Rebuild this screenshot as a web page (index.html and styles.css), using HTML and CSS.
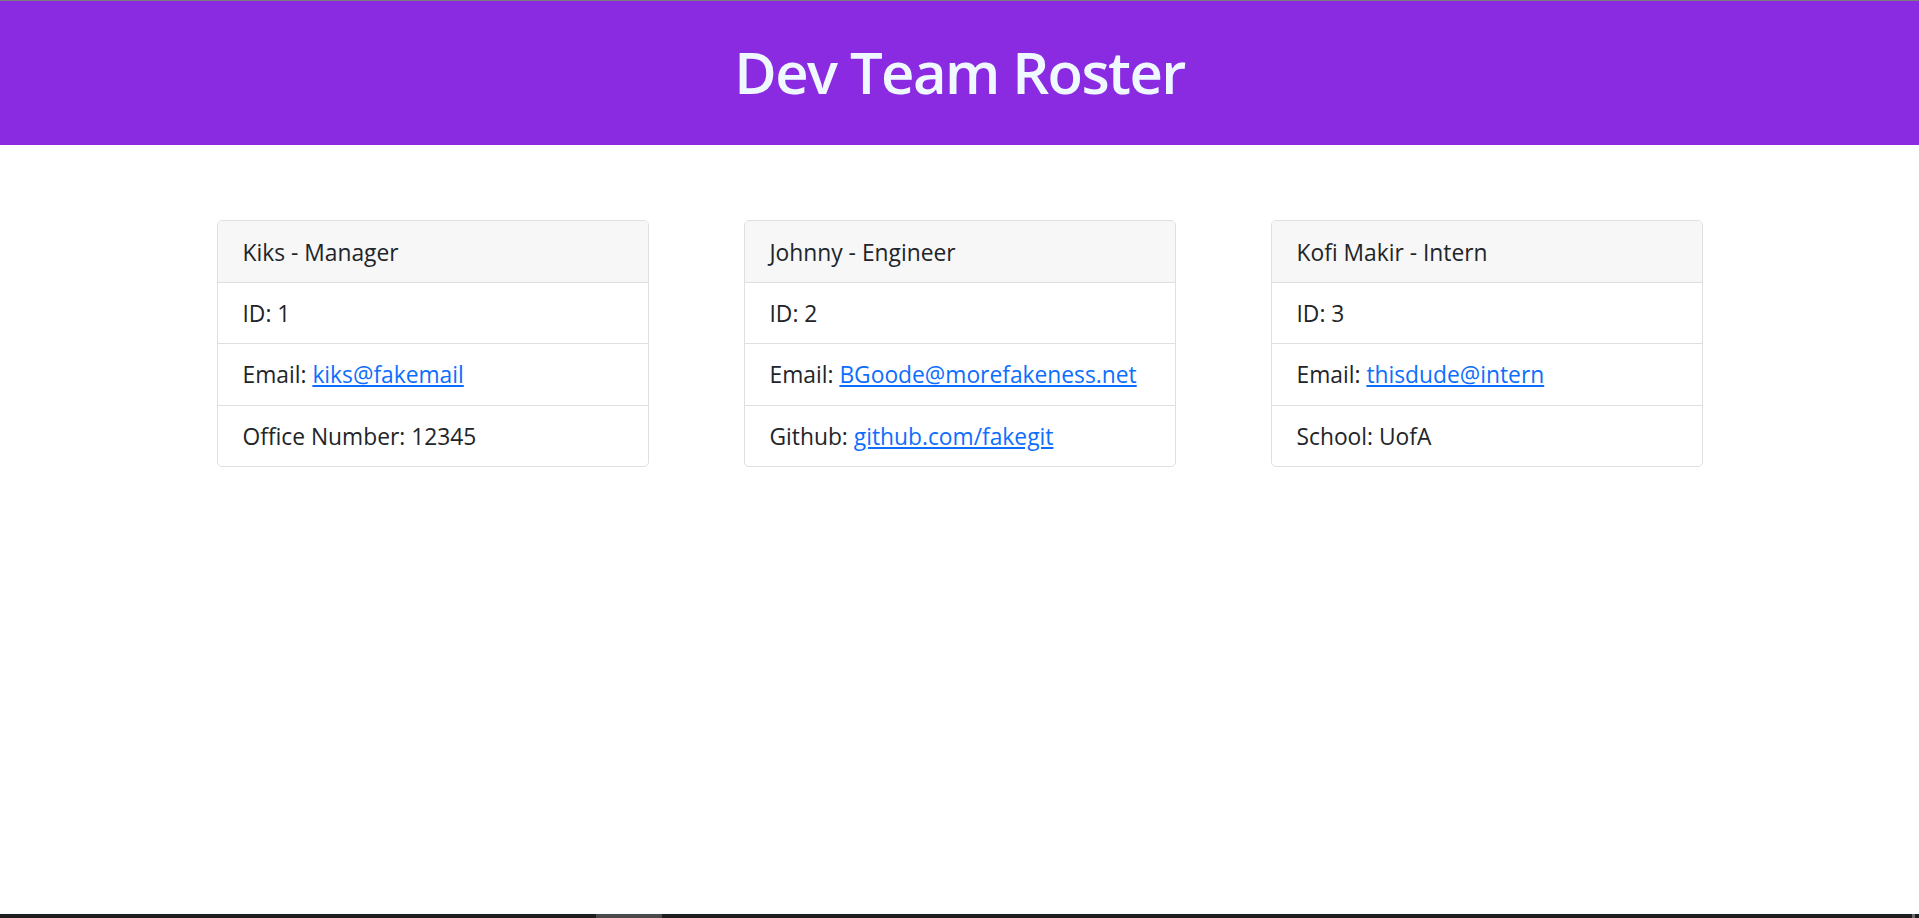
FILE: index.html
```html
<!DOCTYPE html>
<html lang="en">
<head>
<meta charset="utf-8">
<title>Dev Team Roster</title>
<link rel="stylesheet" href="styles.css">
</head>
<body>
<header class="banner">
  <h1 class="banner-title">Dev Team Roster</h1>
</header>
<main class="roster">
  <section class="card">
    <div class="card-header">Kiks - Manager</div>
    <ul class="card-list">
      <li class="card-item">ID: 1</li>
      <li class="card-item">Email: <a href="#" class="card-link">kiks@fakemail</a></li>
      <li class="card-item">Office Number: 12345</li>
    </ul>
  </section>
  <section class="card">
    <div class="card-header">Johnny - Engineer</div>
    <ul class="card-list">
      <li class="card-item">ID: 2</li>
      <li class="card-item">Email: <a href="#" class="card-link">BGoode@morefakeness.net</a></li>
      <li class="card-item">Github: <a href="#" class="card-link">github.com/fakegit</a></li>
    </ul>
  </section>
  <section class="card">
    <div class="card-header">Kofi Makir - Intern</div>
    <ul class="card-list">
      <li class="card-item">ID: 3</li>
      <li class="card-item">Email: <a href="#" class="card-link">thisdude@intern</a></li>
      <li class="card-item">School: UofA</li>
    </ul>
  </section>
</main>
<div class="scrollbar">
  <div class="scroll-thumb"></div>
  <div class="scroll-thumb-end"></div>
</div>
</body>
</html>
```

FILE: styles.css
```css
* { box-sizing: border-box; }

html, body {
  margin: 0;
  padding: 0;
  background: #ffffff;
}

body {
  font-family: "Open Sans", "Noto Sans", sans-serif;
  font-size: 22.8px;
  color: #212529;
}

.banner {
  background: #8a2be2;
  border-top: 1px solid #7a7a7a;
  height: 145px;
  padding-top: 35px;
}

.banner-title {
  margin: 0;
  text-align: center;
  color: #f0f8ff;
  font-size: 58px;
  font-weight: 600;
  letter-spacing: -1.6px;
  line-height: 72px;
}

.roster {
  display: flex;
  justify-content: center;
  gap: 95px;
  padding-top: 75px;
}

.card {
  width: 432px;
  border: 1px solid #dfdfdf;
  border-radius: 5px;
  overflow: hidden;
}

.card-header {
  background: #f7f7f7;
  padding: 17px 25px 13px;
  line-height: 30.5px;
  border-bottom: 1px solid #dfdfdf;
}

.card-list {
  list-style: none;
  margin: 0;
  padding: 0;
}

.card-item {
  padding: 16px 25px 14px;
  line-height: 30.5px;
  border-bottom: 1px solid #dfdfdf;
}

.card-item:last-child {
  border-bottom: none;
}

.card-link {
  color: #0d6efd;
  text-decoration: underline;
}

.scrollbar {
  position: fixed;
  left: 0;
  right: 0;
  bottom: 0;
  height: 4px;
  background: #1e1e1e;
}

.scroll-thumb {
  position: absolute;
  left: 596px;
  width: 66px;
  top: 0;
  bottom: 0;
  background: #4a4a4a;
}

.scroll-thumb-end {
  position: absolute;
  left: 1912px;
  width: 3px;
  top: 0;
  bottom: 0;
  background: #6a6a6a;
}
```
